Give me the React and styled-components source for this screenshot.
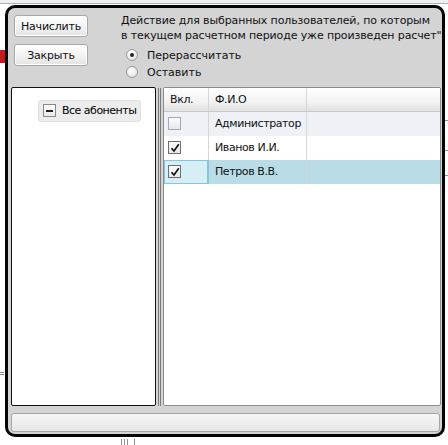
import React from "react";
import styled, { createGlobalStyle } from "styled-components";

const Global = createGlobalStyle`
  html, body { margin: 0; padding: 0; background: #fff; }
  body { font-family: "DejaVu Sans", Verdana, sans-serif; font-size: 11px; color: #000; }
  * { box-sizing: border-box; }
`;

const Desktop = styled.div`
  position: relative;
  width: 448px;
  height: 445px;
  overflow: hidden;
  background: #fff;
`;

const TopStrip = styled.div`
  height: 4px;
  background: #eef1f4;
  border-bottom: 1px solid #a9b2bb;
`;

const BgRed = styled.div`
  position: absolute;
  left: 0;
  top: 50px;
  width: 5px;
  height: 13px;
  background: #c8161d;
`;

const BgTick = styled.div`
  position: absolute;
  left: ${(p) => p.x}px;
  top: ${(p) => p.y}px;
  width: ${(p) => p.w}px;
  height: ${(p) => p.h}px;
  background: #8a8f96;
`;

const Window = styled.div`
  position: absolute;
  left: 5px;
  top: 5px;
  width: 440px;
  height: 432px;
  border: 3px solid #050505;
  border-radius: 10px;
  background: #d4d4d4;
  display: flex;
  flex-direction: column;
  padding: 4px 1px 2px 3px;
`;

const TopArea = styled.div`
  display: flex;
  height: 75px;
`;

const ButtonCol = styled.div`
  display: flex;
  flex-direction: column;
  flex-shrink: 0;
  gap: 7px;
  padding: 3px 0 0 3px;
  width: 110px;
`;

const Btn = styled.button`
  width: 74px;
  height: 22px;
  border: 1px solid #a8a8a8;
  border-radius: 3px;
  background: linear-gradient(#ffffff, #f3f3f3 50%, #e4e4e4);
  font-family: "DejaVu Sans", Verdana, sans-serif;
  font-size: 11px;
  letter-spacing: -0.2px;
  color: #111;
  padding: 0;
  box-shadow: inset 0 0 0 1px #fff;
`;

const Options = styled.div`
  display: flex;
  flex-direction: column;
  min-width: 0;
  padding-top: 1px;
`;

const Note = styled.div`
  line-height: 15px;
  color: #111;
  white-space: nowrap;
  letter-spacing: -0.12px;
`;

const Radios = styled.div`
  display: flex;
  flex-direction: column;
  gap: 1px;
  margin-top: 4px;
`;

const RadioRow = styled.label`
  display: flex;
  align-items: center;
  gap: 9px;
  height: 16px;
  padding-left: 5px;
  color: #111;
`;

const RadioDot = styled.span`
  width: 12px;
  height: 12px;
  border-radius: 50%;
  border: 1px solid #9a9a9a;
  background: radial-gradient(circle at 40% 35%, #ffffff, #e6e6e6 70%, #d0d0d0);
  display: flex;
  align-items: center;
  justify-content: center;
  &::after {
    content: "";
    width: 4px;
    height: 4px;
    border-radius: 50%;
    background: ${(p) => (p.checked ? "#222" : "transparent")};
  }
`;

const Main = styled.div`
  display: flex;
  height: 320px;
`;

const TreePanel = styled.div`
  width: 145px;
  background: #fff;
  border: 1px solid #111;
  border-radius: 2px;
  padding: 12px 0 0 26px;
`;

const TreeItem = styled.div`
  display: inline-flex;
  align-items: center;
  gap: 6px;
  height: 22px;
  padding: 0 4px 0 4px;
  background: #ececec;
  border: 1px solid #e0e0e0;
  border-radius: 3px;
  letter-spacing: -0.5px;
`;

const Expander = styled.span`
  width: 13px;
  height: 13px;
  border: 1px solid #8a8a8a;
  background: linear-gradient(#fff, #e8e8e8);
  display: flex;
  align-items: center;
  justify-content: center;
  &::after {
    content: "";
    width: 7px;
    height: 2px;
    background: #222;
  }
`;

const Splitter = styled.div`
  width: 7px;
  display: flex;
  justify-content: center;
  gap: 1px;
  padding-top: 1px;
  &::before, &::after {
    content: "";
    width: 1px;
    background: #7a7a7a;
  }
`;

const Grid = styled.div`
  flex: 1;
  background: #fff;
  border: 1px solid #8c8c8c;
  border-radius: 2px;
  display: flex;
  flex-direction: column;
`;

const Row = styled.div`
  display: grid;
  grid-template-columns: 45px 98px 1fr;
  height: 24px;
  background: ${(p) =>
    p.header
      ? "linear-gradient(#ffffff, #f2f2f2 60%, #e2e2e2)"
      : p.selected
      ? "#b9dce6"
      : p.alt
      ? "#eef2f7"
      : "#fff"};
  border-bottom: ${(p) => (p.header ? "1px solid #c8c8c8" : "none")};
`;

const Cell = styled.div`
  display: flex;
  align-items: center;
  padding-left: ${(p) => (p.check ? 4 : 6)}px;
  border-right: ${(p) => (p.last ? "none" : "1px solid #d6d6d6")};
  color: #111;
  white-space: nowrap;
  overflow: hidden;
  letter-spacing: -0.4px;
  ${(p) =>
    p.focus
      ? `background: #d6eef5; box-shadow: inset 0 0 0 1px #86c6d8; border-right-color: #86c6d8;`
      : ""}
`;

const Check = styled.span`
  width: 13px;
  height: 13px;
  border: 1px solid ${(p) => (p.on ? "#6e6e6e" : "#a4a8b0")};
  background: linear-gradient(#fdfdfd, #e4e6ea);
  display: flex;
  align-items: center;
  justify-content: center;
`;

const Footer = styled.div`
  margin: 7px 1px 0 0;
  height: 19px;
  border: 1px solid #a6a6a6;
  border-radius: 3px;
  background: linear-gradient(#f6f6f6, #eeeeee 60%, #e6e6e6);
`;

const Tick = () => (
  <svg width="10" height="10" viewBox="0 0 10 10">
    <path d="M1.5 5.2 L4 8 L8.8 1.2" fill="none" stroke="#111" strokeWidth="1.7" />
  </svg>
);

const rows = [
  { name: "Администратор", on: false, alt: true },
  { name: "Иванов И.И.", on: true },
  { name: "Петров В.В.", on: true, selected: true },
];

export default function App() {
  return (
    <>
      <Global />
      <Desktop>
        <TopStrip />
        <BgRed />
        <BgTick x={0} y={372} w={4} h={1} />
        <BgTick x={0} y={374} w={4} h={1} />
        <BgTick x={444} y={120} w={4} h={1} />
        <BgTick x={444} y={150} w={4} h={1} />
        <BgTick x={444} y={175} w={4} h={1} />
        <BgTick x={121} y={439} w={1} h={6} />
        <BgTick x={124} y={439} w={1} h={6} />
        <BgTick x={127} y={439} w={1} h={6} />
        <BgTick x={134} y={439} w={1} h={6} />
        <Window>
          <TopArea>
            <ButtonCol>
              <Btn>Начислить</Btn>
              <Btn>Закрыть</Btn>
            </ButtonCol>
            <Options>
              <Note>Действие для выбранных пользователей, по которым</Note>
              <Note>в текущем расчетном периоде уже произведен расчет"</Note>
              <Radios>
                <RadioRow>
                  <RadioDot checked />
                  Перерассчитать
                </RadioRow>
                <RadioRow>
                  <RadioDot />
                  Оставить
                </RadioRow>
              </Radios>
            </Options>
          </TopArea>
          <Main>
            <TreePanel>
              <TreeItem>
                <Expander />
                Все абоненты
              </TreeItem>
            </TreePanel>
            <Splitter />
            <Grid>
              <Row header>
                <Cell>Вкл.</Cell>
                <Cell>Ф.И.О</Cell>
                <Cell last />
              </Row>
              {rows.map((r) => (
                <Row key={r.name} alt={r.alt} selected={r.selected}>
                  <Cell check focus={r.selected}>
                    <Check on={r.on}>{r.on && <Tick />}</Check>
                  </Cell>
                  <Cell>{r.name}</Cell>
                  <Cell last />
                </Row>
              ))}
            </Grid>
          </Main>
          <Footer />
        </Window>
      </Desktop>
    </>
  );
}
